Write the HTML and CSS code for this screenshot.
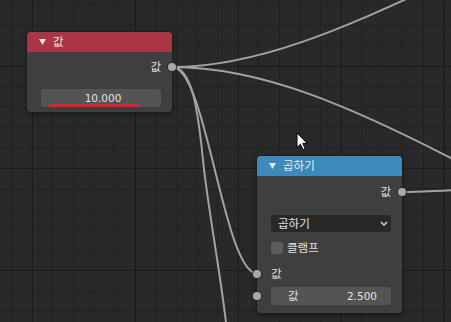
FILE: index.html
```html
<!DOCTYPE html>
<html lang="ko">
<head>
<meta charset="utf-8">
<link rel="stylesheet" href="styles.css">
</head>
<body>
<div class="editor">
  <svg class="wires" width="451" height="322" viewBox="0 0 451 322">
    <path d="M172,67 C270,67 370,15 470,-30"/>
    <path d="M172,67 C260,67 350,105 470,168"/>
    <path d="M172,67 C207,67 223,274 258,274"/>
    <path d="M172,67 C192,67 198,110 203,160 S222,280 228,340"/>
    <path d="M402,192 C420,192 430,191 455,190"/>
  </svg>

  <div class="node node-value">
    <div class="header header-red">
      <svg class="tri" width="7" height="6" viewBox="0 0 7 6"><polygon points="0,0 7,0 3.5,6"/></svg>
      <span class="ko">값</span>
    </div>
    <div class="body">
      <div class="row row-out"><span class="ko">값</span><span class="socket socket-right"></span></div>
      <div class="field field-center">10.000<span class="redbar"></span></div>
    </div>
  </div>

  <div class="node node-math">
    <div class="header header-blue">
      <svg class="tri" width="7" height="6" viewBox="0 0 7 6"><polygon points="0,0 7,0 3.5,6"/></svg>
      <span class="ko">곱하기</span>
    </div>
    <div class="body">
      <div class="row row-out"><span class="ko">값</span><span class="socket socket-right"></span></div>
      <div class="dropdown"><span class="ko">곱하기</span>
        <svg width="8" height="5" viewBox="0 0 8 5"><polyline points="1,1 4,4 7,1"/></svg>
      </div>
      <div class="check-row"><span class="checkbox"></span><span class="ko">클램프</span></div>
      <div class="row row-in"><span class="ko">값</span><span class="socket socket-left"></span></div>
      <div class="field field-split"><span class="ko">값</span><span>2.500</span><span class="socket socket-left socket-field"></span></div>
    </div>
  </div>

  <svg class="cursor" width="13" height="19" viewBox="0 0 13 19">
    <path d="M1,1 L1,15.5 L4.5,12.2 L7,17.8 L9.2,16.8 L6.8,11.4 L11.2,11.4 Z"/>
  </svg>
</div>
</body>
</html>
```

FILE: styles.css
```css
html, body {
  margin: 0;
  padding: 0;
  background: #292929;
}
body {
  font-family: "DejaVu Sans", "Noto Sans CJK KR", sans-serif;
  font-size: 10.5px;
  color: #e2e2e2;
}
.ko {
  font-family: "Noto Sans CJK KR", "DejaVu Sans", sans-serif;
  font-size: 11.5px;
  line-height: 1;
}
.editor {
  position: relative;
  width: 451px;
  height: 322px;
  overflow: hidden;
  background-color: #292929;
  background-image:
    linear-gradient(to right, #1a1a1a 1px, transparent 1px),
    linear-gradient(to bottom, #1a1a1a 1px, transparent 1px),
    linear-gradient(to right, #212121 1px, transparent 1px),
    linear-gradient(to bottom, #212121 1px, transparent 1px);
  background-size: 103px 100%, 100% 102px, 20.6px 100%, 100% 20.4px;
  background-position: 32px 0, 0 66px, 11px 0, 0 4.8px;
}
.wires {
  position: absolute;
  left: 0;
  top: 0;
}
.wires path {
  fill: none;
  stroke: #a2a2a2;
  stroke-width: 2;
}
.node {
  position: absolute;
  width: 145px;
  background: #3f3f3f;
  border-radius: 4px;
  box-shadow: 0 0 0 1px #1e1e1e, 0 2px 5px rgba(0, 0, 0, 0.45);
}
.node-value {
  left: 27px;
  top: 32px;
}
.node-math {
  left: 257px;
  top: 156px;
}
.header {
  height: 20px;
  border-radius: 4px 4px 0 0;
  display: flex;
  align-items: center;
  padding-left: 12px;
  gap: 7px;
  color: #ececec;
}
.header-red {
  background: #a93545;
}
.header-blue {
  background: #3d8aba;
}
.tri polygon {
  fill: #e8e8e8;
}
.body {
  position: relative;
  display: flex;
  flex-direction: column;
  padding: 0 11px 0 14px;
}
.node-value .body {
  padding-top: 4px;
  padding-bottom: 5px;
}
.node-math .body {
  padding-top: 5px;
  padding-bottom: 8px;
}
.row {
  position: relative;
  display: flex;
  align-items: center;
  height: 22px;
}
.row-out {
  justify-content: flex-end;
}
.row-in {
  height: 18px;
  margin-top: 8px;
}
.socket {
  position: absolute;
  width: 8px;
  height: 8px;
  border-radius: 50%;
  background: #a8a8a8;
  box-shadow: 0 0 0 1px #2a2a2a;
  top: 50%;
  margin-top: -4px;
}
.socket-right {
  right: -15px;
}
.socket-left {
  left: -18px;
}
.field {
  position: relative;
  height: 18px;
  background: #545454;
  border-radius: 3px;
  display: flex;
  align-items: center;
}
.node-value .field {
  margin-top: 11px;
}
.field-center {
  justify-content: center;
  padding-left: 4px;
}
.redbar {
  position: absolute;
  left: 8px;
  right: 22px;
  bottom: 0;
  height: 3px;
  background: #e1222f;
  border-radius: 1px;
}
.field-split {
  justify-content: space-between;
  padding: 0 14px 0 17px;
  margin-top: 4px;
}
.dropdown {
  margin-top: 12px;
  height: 17px;
  background: #282828;
  border-radius: 3px;
  display: flex;
  align-items: center;
  justify-content: space-between;
  padding: 0 3px 0 7px;
}
.dropdown polyline {
  fill: none;
  stroke: #dcdcdc;
  stroke-width: 1.4;
}
.check-row {
  margin-top: 7px;
  height: 18px;
  display: flex;
  align-items: center;
  gap: 4px;
}
.checkbox {
  width: 12px;
  height: 12px;
  background: #5c5c5c;
  border-radius: 2px;
}
.cursor {
  position: absolute;
  left: 296px;
  top: 132px;
}
.cursor path {
  fill: #ffffff;
  stroke: #000000;
  stroke-width: 1;
  stroke-linejoin: round;
}
```
